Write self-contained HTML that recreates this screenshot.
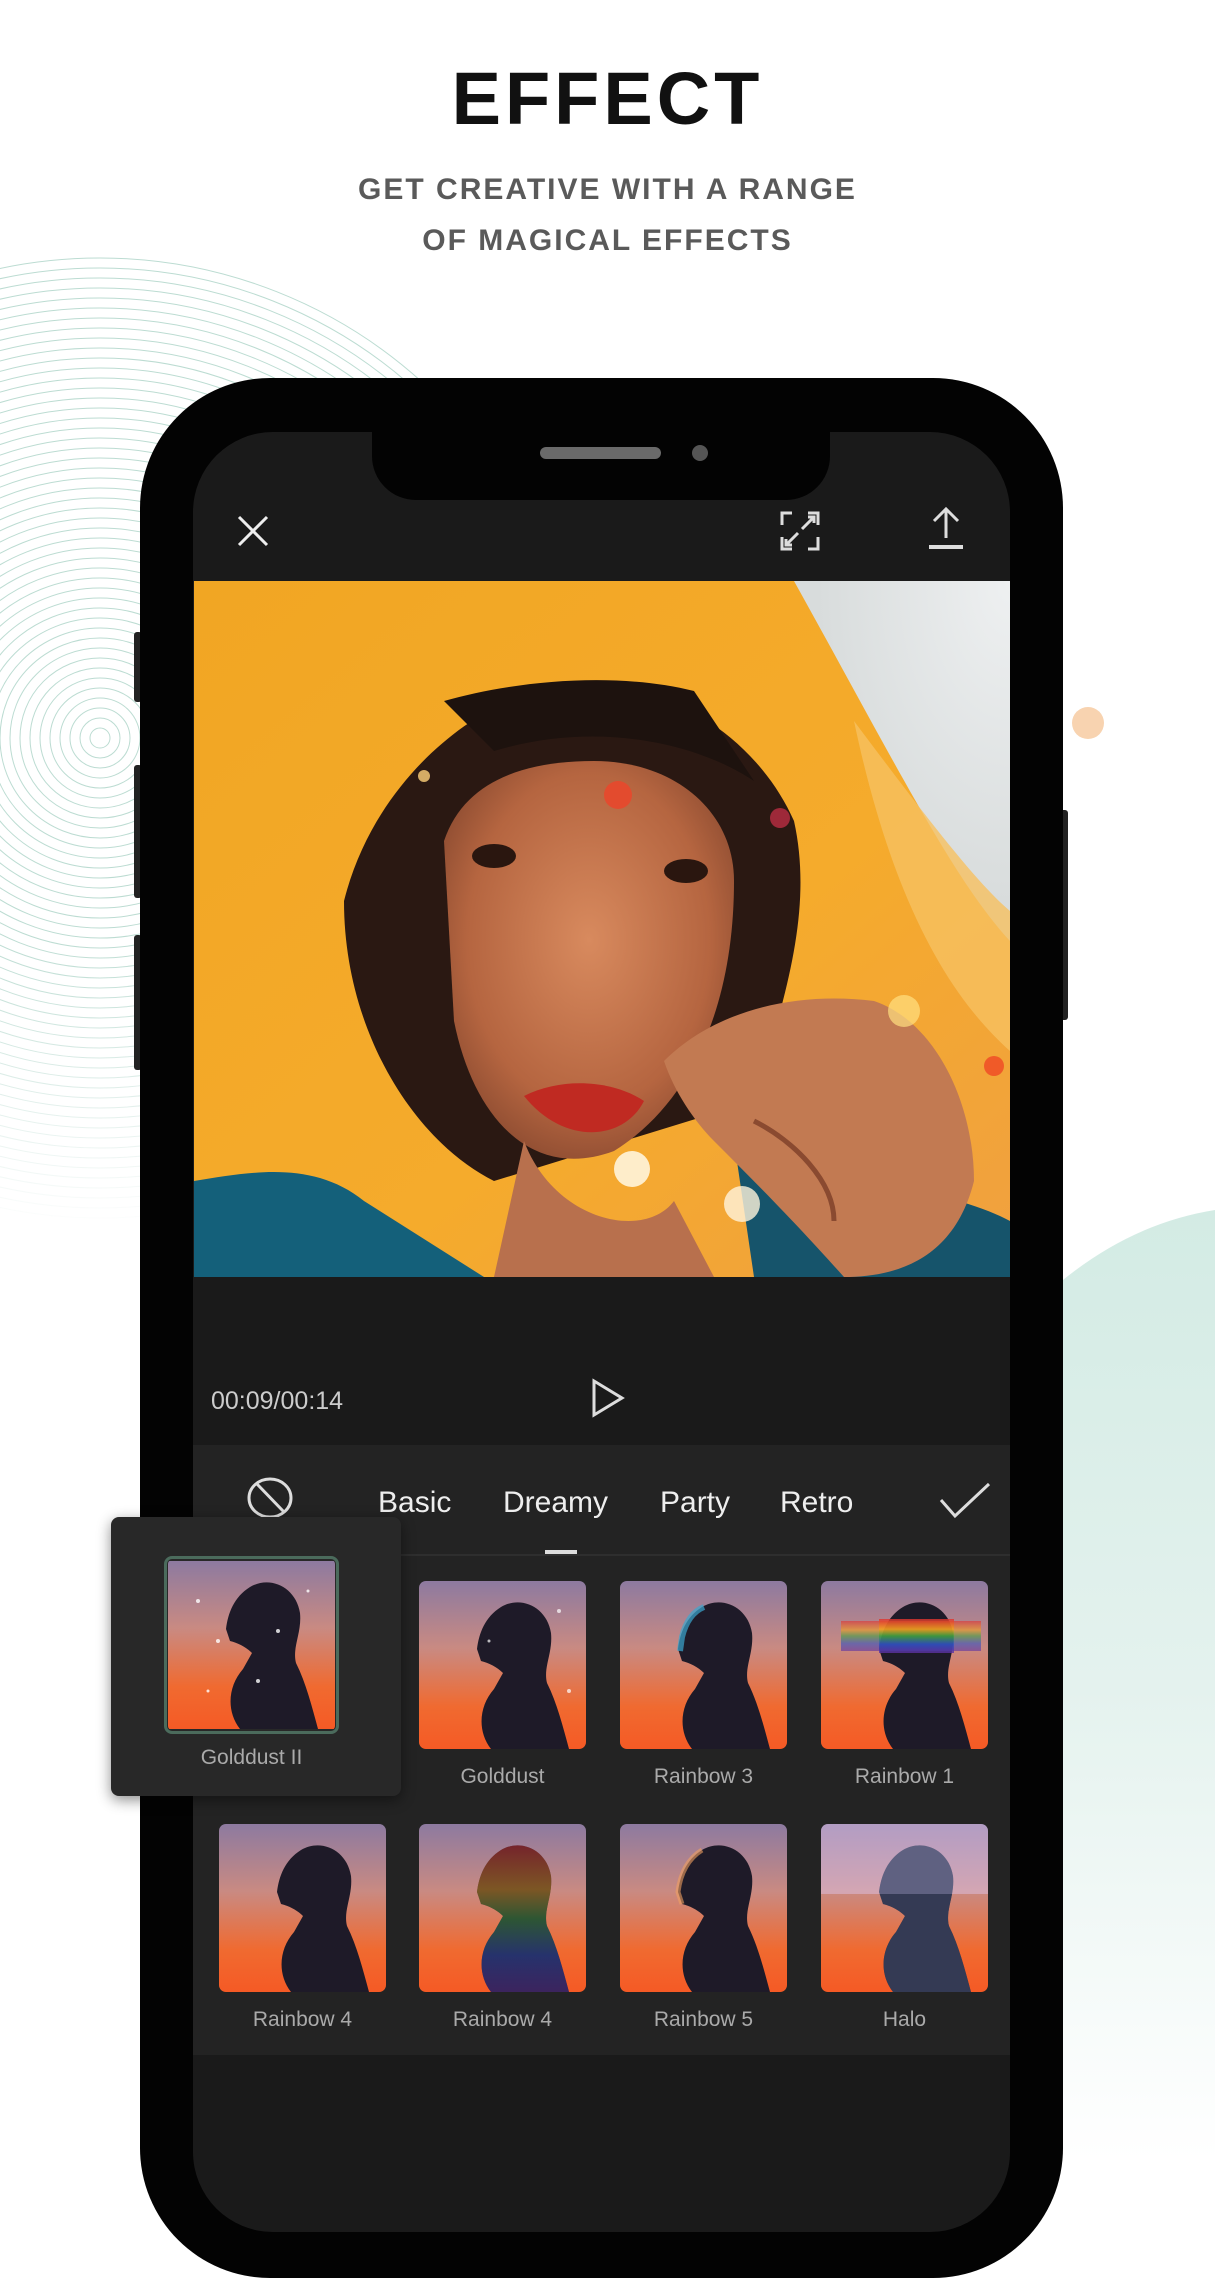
<!DOCTYPE html>
<html><head><meta charset="utf-8">
<style>
*{margin:0;padding:0;box-sizing:border-box}
body{width:1215px;height:2160px;position:relative;overflow:hidden;background:#fff;font-family:"Liberation Sans",sans-serif}
.abs{position:absolute}
h1{position:absolute;left:0;width:1215px;top:56px;text-align:center;font-size:74px;font-weight:bold;letter-spacing:4px;color:#111}
.sub{position:absolute;left:0;width:1215px;text-align:center;font-size:30px;letter-spacing:2px;color:#5a5a5a;line-height:50px;font-weight:bold}
.tab{position:absolute;top:1486px;font-size:30px;color:#eee}
.lbl{position:absolute;font-size:21px;color:#aaa;text-align:center;width:167px}
.th{position:absolute;width:167px;height:168px;border-radius:7px;overflow:hidden}
</style></head><body>
<svg class="abs" style="left:0;top:0" width="1215" height="2160">
<defs>
<linearGradient id="vf" x1="0" y1="0" x2="0" y2="1"><stop offset="0" stop-color="#fff"/><stop offset="0.7" stop-color="#fff"/><stop offset="1" stop-color="#fff" stop-opacity="0"/></linearGradient>
<mask id="m"><rect x="0" y="250" width="500" height="980" fill="url(#vf)"/></mask>
<linearGradient id="gr" x1="0" y1="0" x2="0" y2="1"><stop offset="0" stop-color="#d3ebe4"/><stop offset="0.5" stop-color="#e4f2ee"/><stop offset="1" stop-color="#fff"/></linearGradient>
</defs>
<g mask="url(#m)" fill="none" stroke="#bcdcd2" stroke-width="1">
<circle cx="100" cy="738" r="10"/><circle cx="100" cy="738" r="20"/><circle cx="100" cy="738" r="30"/><circle cx="100" cy="738" r="40"/><circle cx="100" cy="738" r="50"/><circle cx="100" cy="738" r="60"/><circle cx="100" cy="738" r="70"/><circle cx="100" cy="738" r="80"/><circle cx="100" cy="738" r="90"/><circle cx="100" cy="738" r="100"/><circle cx="100" cy="738" r="110"/><circle cx="100" cy="738" r="120"/><circle cx="100" cy="738" r="130"/><circle cx="100" cy="738" r="140"/><circle cx="100" cy="738" r="150"/><circle cx="100" cy="738" r="160"/><circle cx="100" cy="738" r="170"/><circle cx="100" cy="738" r="180"/><circle cx="100" cy="738" r="190"/><circle cx="100" cy="738" r="200"/><circle cx="100" cy="738" r="210"/><circle cx="100" cy="738" r="220"/><circle cx="100" cy="738" r="230"/><circle cx="100" cy="738" r="240"/><circle cx="100" cy="738" r="250"/><circle cx="100" cy="738" r="260"/><circle cx="100" cy="738" r="270"/><circle cx="100" cy="738" r="280"/><circle cx="100" cy="738" r="290"/><circle cx="100" cy="738" r="300"/><circle cx="100" cy="738" r="310"/><circle cx="100" cy="738" r="320"/><circle cx="100" cy="738" r="330"/><circle cx="100" cy="738" r="340"/><circle cx="100" cy="738" r="350"/><circle cx="100" cy="738" r="360"/><circle cx="100" cy="738" r="370"/><circle cx="100" cy="738" r="380"/><circle cx="100" cy="738" r="390"/><circle cx="100" cy="738" r="400"/><circle cx="100" cy="738" r="410"/><circle cx="100" cy="738" r="420"/><circle cx="100" cy="738" r="430"/><circle cx="100" cy="738" r="440"/><circle cx="100" cy="738" r="450"/><circle cx="100" cy="738" r="460"/><circle cx="100" cy="738" r="470"/><circle cx="100" cy="738" r="480"/>
</g>
<path d="M1040 1300 Q1120 1225 1215 1210 L1215 2160 L1040 2160 Z" fill="url(#gr)"/>
<circle cx="1088" cy="723" r="16" fill="#f8d3b0"/>
</svg>
<h1>EFFECT</h1>
<div class="sub" style="top:165px">GET CREATIVE WITH A RANGE</div>
<div class="sub" style="top:216px">OF MAGICAL EFFECTS</div>

<div class="abs" style="left:134px;top:632px;width:8px;height:70px;background:#222;border-radius:3px"></div>
<div class="abs" style="left:134px;top:765px;width:8px;height:133px;background:#222;border-radius:3px"></div>
<div class="abs" style="left:134px;top:935px;width:8px;height:135px;background:#222;border-radius:3px"></div>
<div class="abs" style="left:1060px;top:810px;width:8px;height:210px;background:#222;border-radius:3px"></div>
<div class="abs" style="left:140px;top:378px;width:923px;height:1900px;background:#030303;border-radius:130px"></div>
<div class="abs" style="left:193px;top:432px;width:817px;height:1800px;background:#1a1a1a;border-radius:80px;overflow:hidden"></div>
<div class="abs" style="left:372px;top:420px;width:458px;height:80px;background:#030303;border-radius:0 0 44px 44px"></div>
<div class="abs" style="left:540px;top:447px;width:121px;height:12px;background:#6a6a6a;border-radius:6px"></div>
<div class="abs" style="left:692px;top:445px;width:16px;height:16px;background:#555;border-radius:50%"></div>
<svg class="abs" style="left:236px;top:514px" width="34" height="34"><path d="M3 3L31 31M31 3L3 31" stroke="#eee" stroke-width="3"/></svg>
<svg class="abs" style="left:780px;top:511px" width="40" height="40" fill="none" stroke="#ddd" stroke-width="3"><path d="M2 14V2H12M28 2H38V14M38 26V38H28M12 38H2V26M22 18L34 6M28 6H34V12M18 22L6 34M6 28V34H12"/></svg>
<svg class="abs" style="left:926px;top:506px" width="40" height="44" fill="none" stroke="#ddd" stroke-width="3"><path d="M20 32V4M8 15L20 3L32 15"/><path d="M3 41H37" stroke-width="4"/></svg>
<svg class="abs" style="left:194px;top:581px" width="816" height="696" viewBox="0 0 816 696">
<defs>
<linearGradient id="hat" x1="0" y1="0" x2="1" y2="1"><stop offset="0" stop-color="#f1a623"/><stop offset="0.6" stop-color="#f5ab2c"/><stop offset="1" stop-color="#f0a040"/></linearGradient>
<radialGradient id="face" cx="0.5" cy="0.45" r="0.6"><stop offset="0" stop-color="#d88a5e"/><stop offset="0.7" stop-color="#b56540"/><stop offset="1" stop-color="#8a4a30"/></radialGradient>
<radialGradient id="sky" cx="1" cy="0" r="0.9"><stop offset="0" stop-color="#eef0f1"/><stop offset="1" stop-color="#d8dcdc"/></radialGradient>
</defs>
<rect width="816" height="696" fill="url(#hat)"/>
<path d="M600 0H816V360C760 300 700 180 600 0Z" fill="url(#sky)"/>
<path d="M660 140C720 220 780 300 816 330V470C760 420 700 330 660 140Z" fill="#f6c060" opacity=".8"/>
<path d="M150 320C180 200 280 120 360 105C460 90 560 150 600 240C620 330 590 420 560 520L300 600C220 560 150 450 150 320Z" fill="#2a1812"/>
<path d="M250 260C270 200 330 180 400 180C480 180 540 230 540 300C540 420 500 520 420 570C340 600 280 540 260 440Z" fill="url(#face)"/>
<path d="M250 120C320 100 420 90 500 110L560 200C500 160 400 140 300 170Z" fill="#1d120e"/>
<ellipse cx="300" cy="275" rx="22" ry="12" fill="#2a160f"/><ellipse cx="492" cy="290" rx="22" ry="12" fill="#2a160f"/>
<path d="M330 515C370 495 420 500 450 520C430 560 370 565 330 515Z" fill="#c02a22"/>
<path d="M330 560C360 640 450 660 480 620L520 696H300Z" fill="#b8704d"/>
<path d="M0 600C60 590 120 580 170 620L290 696H0Z" fill="#14607a"/>
<path d="M540 560L560 696H816V640C780 620 700 600 600 590Z" fill="#16546b"/>
<path d="M470 480C520 430 600 410 680 420C740 440 780 520 780 600C760 680 700 696 650 696C600 640 560 600 520 560C500 540 480 510 470 480Z" fill="#c27a52"/>
<path d="M560 540C600 560 640 600 640 640" stroke="#8a4a30" stroke-width="5" fill="none"/>
<circle cx="230" cy="195" r="6" fill="#ffd27a" opacity=".8"/><circle cx="424" cy="214" r="14" fill="#e8482c" opacity=".9"/><circle cx="586" cy="237" r="10" fill="#d0304a" opacity=".7"/>
<circle cx="438" cy="588" r="18" fill="#fff4dc" opacity=".9"/><circle cx="548" cy="623" r="18" fill="#fff4dc" opacity=".8"/><circle cx="710" cy="430" r="16" fill="#ffe080" opacity=".7"/><circle cx="800" cy="485" r="10" fill="#f05a28"/>
</svg>
<div class="abs" style="left:211px;top:1387px;font-size:25px;color:#ccc">00:09/00:14</div>
<svg class="abs" style="left:590px;top:1378px" width="36" height="40"><path d="M4 3V37L32 20Z" fill="none" stroke="#ddd" stroke-width="3"/></svg>
<div class="abs" style="left:193px;top:1445px;width:817px;height:610px;background:#232323"></div>
<div class="abs" style="left:400px;top:1554px;width:610px;height:2px;background:#2e2e2e"></div>
<svg class="abs" style="left:244px;top:1476px" width="52" height="44" fill="none" stroke="#ddd" stroke-width="3"><ellipse cx="26" cy="22" rx="21" ry="19"/><path d="M13 8L40 36"/></svg>
<div class="tab" style="left:378px">Basic</div>
<div class="tab" style="left:503px">Dreamy</div>
<div class="tab" style="left:660px">Party</div>
<div class="tab" style="left:780px">Retro</div>
<svg class="abs" style="left:938px;top:1480px" width="54" height="40"><path d="M3 20L17 36L51 4" fill="none" stroke="#ddd" stroke-width="3"/></svg>
<div class="abs" style="left:545px;top:1550px;width:32px;height:4px;background:#ddd"></div>

<svg width="0" height="0" style="position:absolute"><defs>
<linearGradient id="sun" x1="0" y1="0" x2="0" y2="1"><stop offset="0" stop-color="#8d7aa0"/><stop offset="0.4" stop-color="#c98a82"/><stop offset="0.75" stop-color="#f06a30"/><stop offset="1" stop-color="#f55a25"/></linearGradient>
<linearGradient id="rb" x1="0" y1="0" x2="0" y2="1"><stop offset="0" stop-color="#e03030"/><stop offset="0.3" stop-color="#f0a020"/><stop offset="0.5" stop-color="#40a040"/><stop offset="0.75" stop-color="#3050c0"/><stop offset="1" stop-color="#6030a0"/></linearGradient>
<g id="sil"><rect width="167" height="168" fill="url(#sun)"/><path d="M72 168C58 150 60 125 75 108L84 92C78 86 70 82 62 80L58 68C60 52 66 36 82 26C102 14 128 26 132 52C134 72 124 86 128 102C138 122 144 146 150 168Z" fill="#1e1a28"/></g>
</defs></svg>

<div class="abs" style="left:111px;top:1517px;width:290px;height:279px;background:#282828;border-radius:8px;box-shadow:0 4px 14px rgba(0,0,0,.45)"></div>
<div class="abs" style="left:164px;top:1556px;width:175px;height:178px;border:3px solid #4b6b5c;border-radius:8px"></div>
<svg class="th" style="left:168px;top:1560px;width:167px;height:170px;border-radius:4px" viewBox="0 0 167 168"><use href="#sil"/><g fill="#fff" opacity=".8"><circle cx="30" cy="40" r="2"/><circle cx="50" cy="80" r="2"/><circle cx="110" cy="70" r="2"/><circle cx="140" cy="30" r="1.5"/><circle cx="90" cy="120" r="2"/><circle cx="40" cy="130" r="1.5"/></g></svg>
<div class="lbl" style="left:168px;top:1746px">Golddust II</div>

<svg class="th" style="left:419px;top:1581px" viewBox="0 0 167 168"><use href="#sil"/><g fill="#fff" opacity=".7"><circle cx="140" cy="30" r="2"/><circle cx="70" cy="60" r="1.5"/><circle cx="150" cy="110" r="2"/></g></svg>
<div class="lbl" style="left:419px;top:1765px">Golddust</div>
<svg class="th" style="left:620px;top:1581px" viewBox="0 0 167 168"><use href="#sil"/><path d="M60 70L62 56C66 40 74 30 84 26" stroke="#3aa8d0" stroke-width="6" fill="none" opacity=".7"/></svg>
<div class="lbl" style="left:620px;top:1765px">Rainbow 3</div>
<svg class="th" style="left:821px;top:1581px" viewBox="0 0 167 168"><use href="#sil"/><rect x="20" y="40" width="140" height="30" fill="url(#rb)" opacity=".6"/><rect x="58" y="38" width="75" height="34" fill="url(#rb)" opacity=".8"/></svg>
<div class="lbl" style="left:821px;top:1765px">Rainbow 1</div>

<svg class="th" style="left:219px;top:1824px" viewBox="0 0 167 168"><use href="#sil"/></svg>
<div class="lbl" style="left:219px;top:2008px">Rainbow 4</div>
<svg class="th" style="left:419px;top:1824px" viewBox="0 0 167 168"><use href="#sil"/><path d="M72 168C58 150 60 125 75 108L84 92C78 86 70 82 62 80L58 68C60 52 66 36 82 26C102 14 128 26 132 52C134 72 124 86 128 102C138 122 144 146 150 168Z" fill="url(#rb)" opacity=".45"/></svg>
<div class="lbl" style="left:419px;top:2008px">Rainbow 4</div>
<svg class="th" style="left:620px;top:1824px" viewBox="0 0 167 168"><use href="#sil"/><path d="M62 80L58 68C60 52 66 36 82 26" stroke="#f0a060" stroke-width="5" fill="none" opacity=".6"/></svg>
<div class="lbl" style="left:620px;top:2008px">Rainbow 5</div>
<svg class="th" style="left:821px;top:1824px" viewBox="0 0 167 168"><use href="#sil"/><rect width="167" height="70" fill="#e0c8f0" opacity=".45"/><path d="M72 168C58 150 60 125 75 108L84 92C78 86 70 82 62 80L58 68C60 52 66 36 82 26C102 14 128 26 132 52C134 72 124 86 128 102C138 122 144 146 150 168Z" fill="#4a5a80" opacity=".5"/></svg>
<div class="lbl" style="left:821px;top:2008px">Halo</div>
</body></html>
